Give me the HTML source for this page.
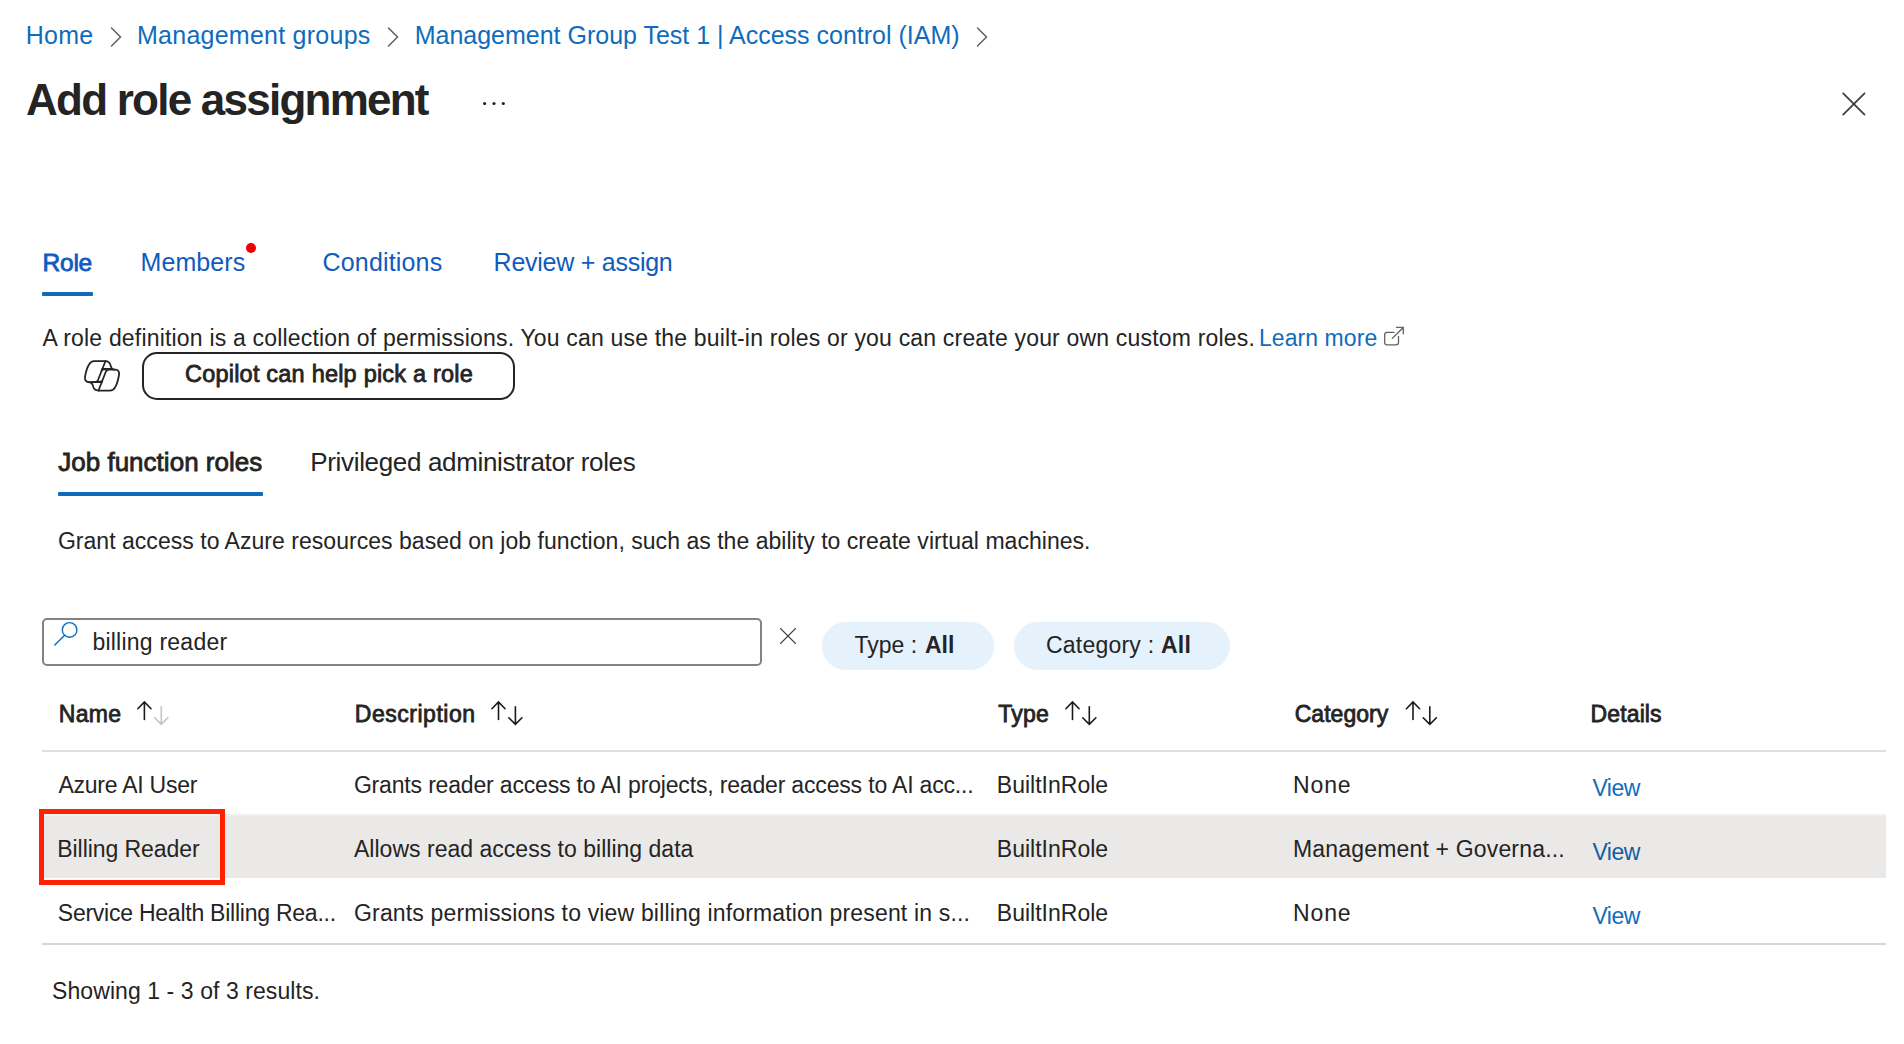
<!DOCTYPE html>
<html><head><meta charset="utf-8"><title>Add role assignment</title>
<style>
html,body{margin:0;padding:0;background:#fff;width:1904px;height:1044px;overflow:hidden;font-family:'Liberation Sans', sans-serif;}
.t{position:absolute;line-height:1;white-space:nowrap;}
.a{position:absolute;}
</style></head><body>
<!-- table rows -->
<div class="a" style="left:42px;top:750px;width:1844px;height:2px;background:#e0e0e0"></div>
<div class="a" style="left:42px;top:814px;width:1844px;height:64px;background:#ebe9e7"></div>
<div class="a" style="left:42px;top:814px;width:1844px;height:2px;background:#f0f0f0"></div>
<div class="a" style="left:42px;top:943px;width:1844px;height:2px;background:#d6d6d6"></div>
<!-- red highlight box -->
<div class="a" style="left:39px;top:809px;width:176px;height:66px;border:5px solid #ff2200"></div>
<!-- tab underline -->
<div class="a" style="left:42px;top:292px;width:51px;height:4px;background:#0f6cbd;border-radius:1px"></div>
<div class="a" style="left:58px;top:492px;width:205px;height:4px;background:#0f6cbd;border-radius:1px"></div>
<!-- red dot -->
<div class="a" style="left:246px;top:243px;width:10px;height:10px;border-radius:50%;background:#f00000"></div>
<!-- copilot button -->
<div class="a" style="left:142px;top:352px;width:369px;height:44px;border:2px solid #242424;border-radius:15px"></div>
<!-- search box -->
<div class="a" style="left:42px;top:618px;width:716px;height:44px;border:2px solid #838383;border-radius:5px"></div>
<!-- pills -->
<div class="a" style="left:822px;top:622px;width:172px;height:48px;border-radius:24px;background:#e5f1fb"></div>
<div class="a" style="left:1014px;top:622px;width:216px;height:48px;border-radius:24px;background:#e5f1fb"></div>
<!-- breadcrumb chevrons -->
<svg class="a" style="left:0;top:0" width="1904" height="130" viewBox="0 0 1904 130">
 <g fill="none" stroke="#616161" stroke-width="1.5" stroke-linecap="round" stroke-linejoin="miter">
  <polyline points="111.5,28 120.5,37 111.5,46"/>
  <polyline points="388.5,28 397.5,37 388.5,46"/>
  <polyline points="977.5,28 986.5,37 977.5,46"/>
 </g>
 <g fill="#242424">
  <circle cx="484.6" cy="103.5" r="1.6"/><circle cx="494" cy="103.5" r="1.6"/><circle cx="503.3" cy="103.5" r="1.6"/>
 </g>
 <g stroke="#424242" stroke-width="1.8" stroke-linecap="round">
  <line x1="1843.2" y1="93.3" x2="1864.5" y2="114.6"/><line x1="1864.5" y1="93.3" x2="1843.2" y2="114.6"/>
 </g>
</svg>
<!-- external link icon -->
<svg class="a" style="left:1376px;top:320px" width="36" height="32" viewBox="0 0 36 32">
 <g fill="none" stroke="#616161" stroke-width="1.3" stroke-linecap="round" stroke-linejoin="round">
  <path d="M18.1,12.3 H11 Q8.7,12.3 8.7,14.6 V22.5 Q8.7,24.8 11,24.8 H20.2 Q22.5,24.8 22.5,22.5 V16.3"/>
  <path d="M16.3,18.4 L27.3,7.5 M20.5,7.4 H27.3 V13.8"/>
 </g>
</svg>
<!-- copilot icon -->
<svg class="a" style="left:76px;top:352px" width="52" height="48" viewBox="0 0 52 48">
 <g fill="none" stroke="#242424" stroke-width="1.75" stroke-linecap="round" stroke-linejoin="round">
  <path d="M18,9 H29.5 L22,28 C21.3,29.5 20.3,30 19,30 H12.5 C10,30 8.6,28 9,25 C9.8,20 11.5,15 13,12.5 C14.3,10.2 16,9 18,9 Z"/>
  <path d="M33,17.5 H39.5 C42,17.5 43.6,19.5 43,23 C42.2,28 40.5,33 39,35.5 C37.7,37.8 36,38.5 34,38.5 H22.5 L29.8,19.8 C30.5,18.3 31.5,17.5 33,17.5 Z"/>
  <path d="M29.5,9 C32,9 33.8,10.5 34.5,13 L35.3,15.5 C35.8,17 37,17.5 38.5,17.5"/>
  <path d="M12.5,30 C14.5,30 16,31 16.7,33 L17.5,35.5 C18.2,37.5 20,38.5 22.5,38.5"/>
  <path d="M26.2,16.8 H35.5"/>
  <path d="M15.8,30.2 H25.8"/>
  <path d="M25.5,18.5 C26.5,17.3 28,17.2 29.8,17.6"/>
  <path d="M22,29.3 C23.5,29.8 25,29.8 26.2,29"/>
 </g>
</svg>
<!-- search icon + clear -->
<svg class="a" style="left:40px;top:610px" width="780" height="50" viewBox="40 610 780 50">
 <g fill="none" stroke="#0f6cbd" stroke-width="1.4" stroke-linecap="round">
  <circle cx="69.6" cy="629.9" r="7.3"/>
  <line x1="54.8" y1="645" x2="64.4" y2="635.4"/>
 </g>
 <g stroke="#424242" stroke-width="1.1" stroke-linecap="round">
  <line x1="780.5" y1="628.5" x2="795.5" y2="643.5"/><line x1="795.5" y1="628.5" x2="780.5" y2="643.5"/>
 </g>
</svg>
<!-- sort arrows -->
<svg class="a" style="left:0;top:690px" width="1904" height="45" viewBox="0 690 1904 45">
 <g fill="none" stroke-width="1.6" stroke-linecap="round" stroke-linejoin="miter">
  <g stroke="#1a1a1a"><path d="M144.4,719.5 V701.8 M137.8,708.7 L144.4,702 L151,708.7"/></g>
  <g stroke="#c4c4c4"><path d="M161.3,706.7 V724.5 M154.7,717.8 L161.3,724.4 L167.9,717.8"/></g>
  <g stroke="#1a1a1a">
   <path d="M498.5,719.5 V701.8 M491.9,708.7 L498.5,702 L505.1,708.7"/>
   <path d="M515.4,706.7 V724.5 M508.8,717.8 L515.4,724.4 L522,717.8"/>
   <path d="M1072.5,719.5 V701.8 M1065.9,708.7 L1072.5,702 L1079.1,708.7"/>
   <path d="M1089.3,706.7 V724.5 M1082.7,717.8 L1089.3,724.4 L1095.9,717.8"/>
   <path d="M1413,719.5 V701.8 M1406.4,708.7 L1413,702 L1419.6,708.7"/>
   <path d="M1429.8,706.7 V724.5 M1423.2,717.8 L1429.8,724.4 L1436.4,717.8"/>
  </g>
 </g>
</svg>

<div class="t" style="left:25.80px;top:23.00px;font-size:25px;font-weight:400;color:#0f6cbd;letter-spacing:0.200px;">Home</div><div class="t" style="left:137.00px;top:23.00px;font-size:25px;font-weight:400;color:#0f6cbd;letter-spacing:0.250px;">Management groups</div><div class="t" style="left:414.70px;top:23.00px;font-size:25px;font-weight:400;color:#0f6cbd;letter-spacing:-0.007px;">Management Group Test 1 | Access control (IAM)</div><div class="t" style="left:26.00px;top:77.60px;font-size:44px;font-weight:700;color:#242424;letter-spacing:-1.761px;">Add role assignment</div><div class="t" style="left:42.60px;top:251.00px;font-size:24.5px;font-weight:400;color:#0f5bbf;letter-spacing:-0.267px;-webkit-text-stroke:0.8px currentColor;">Role</div><div class="t" style="left:140.60px;top:250.00px;font-size:25px;font-weight:400;color:#0f5bbf;letter-spacing:0.067px;">Members</div><div class="t" style="left:322.60px;top:250.00px;font-size:25px;font-weight:400;color:#0f5bbf;letter-spacing:0.156px;">Conditions</div><div class="t" style="left:493.60px;top:250.00px;font-size:25px;font-weight:400;color:#0f5bbf;letter-spacing:-0.257px;">Review + assign</div><div class="t" style="left:42.40px;top:326.70px;font-size:23px;font-weight:400;color:#242424;letter-spacing:0.185px;">A role definition is a collection of permissions. You can use the built-in roles or you can create your own custom roles.</div><div class="t" style="left:1259.00px;top:326.70px;font-size:23px;font-weight:400;color:#0f6cbd;letter-spacing:0.067px;">Learn more</div><div class="t" style="left:185.00px;top:362.80px;font-size:23.5px;font-weight:400;color:#242424;letter-spacing:0.211px;-webkit-text-stroke:0.8px currentColor;">Copilot can help pick a role</div><div class="t" style="left:58.20px;top:449.00px;font-size:26px;font-weight:400;color:#242424;letter-spacing:0.018px;-webkit-text-stroke:0.8px currentColor;">Job function roles</div><div class="t" style="left:310.30px;top:448.80px;font-size:26px;font-weight:400;color:#242424;letter-spacing:-0.338px;">Privileged administrator roles</div><div class="t" style="left:57.90px;top:529.60px;font-size:23px;font-weight:400;color:#242424;letter-spacing:0.034px;">Grant access to Azure resources based on job function, such as the ability to create virtual machines.</div><div class="t" style="left:92.40px;top:630.70px;font-size:23px;font-weight:400;color:#242424;letter-spacing:0.231px;">billing reader</div><div class="t" style="left:854.40px;top:633.90px;font-size:23px;font-weight:400;color:#242424;letter-spacing:0.040px;">Type :</div><div class="t" style="left:925.00px;top:633.90px;font-size:23px;font-weight:700;color:#242424;letter-spacing:0.000px;">All</div><div class="t" style="left:1045.90px;top:633.90px;font-size:23px;font-weight:400;color:#242424;letter-spacing:0.233px;">Category :</div><div class="t" style="left:1161.00px;top:633.90px;font-size:23px;font-weight:700;color:#242424;letter-spacing:0.200px;">All</div><div class="t" style="left:58.70px;top:703.00px;font-size:23px;font-weight:400;color:#242424;letter-spacing:0.333px;-webkit-text-stroke:0.8px currentColor;">Name</div><div class="t" style="left:354.80px;top:702.50px;font-size:23px;font-weight:400;color:#242424;letter-spacing:0.520px;-webkit-text-stroke:0.8px currentColor;">Description</div><div class="t" style="left:998.20px;top:703.00px;font-size:23px;font-weight:400;color:#242424;letter-spacing:0.233px;-webkit-text-stroke:0.8px currentColor;">Type</div><div class="t" style="left:1294.70px;top:703.00px;font-size:23px;font-weight:400;color:#242424;letter-spacing:0.043px;-webkit-text-stroke:0.8px currentColor;">Category</div><div class="t" style="left:1590.60px;top:703.00px;font-size:23px;font-weight:400;color:#242424;letter-spacing:0.117px;-webkit-text-stroke:0.8px currentColor;">Details</div><div class="t" style="left:58.40px;top:774.00px;font-size:23px;font-weight:400;color:#242424;letter-spacing:-0.242px;">Azure AI User</div><div class="t" style="left:353.90px;top:774.00px;font-size:23px;font-weight:400;color:#242424;letter-spacing:-0.168px;">Grants reader access to AI projects, reader access to AI acc...</div><div class="t" style="left:996.80px;top:774.00px;font-size:23px;font-weight:400;color:#242424;letter-spacing:0.010px;">BuiltInRole</div><div class="t" style="left:1293.00px;top:774.00px;font-size:23px;font-weight:400;color:#242424;letter-spacing:0.867px;">None</div><div class="t" style="left:1592.40px;top:777.00px;font-size:23px;font-weight:400;color:#0f6cbd;letter-spacing:-0.467px;">View</div><div class="t" style="left:57.30px;top:837.70px;font-size:23px;font-weight:400;color:#242424;letter-spacing:-0.069px;">Billing Reader</div><div class="t" style="left:354.00px;top:837.70px;font-size:23px;font-weight:400;color:#242424;letter-spacing:0.018px;">Allows read access to billing data</div><div class="t" style="left:996.80px;top:837.70px;font-size:23px;font-weight:400;color:#242424;letter-spacing:0.010px;">BuiltInRole</div><div class="t" style="left:1293.00px;top:837.70px;font-size:23px;font-weight:400;color:#242424;letter-spacing:0.173px;">Management + Governa...</div><div class="t" style="left:1592.40px;top:840.70px;font-size:23px;font-weight:400;color:#115ea3;letter-spacing:-0.467px;">View</div><div class="t" style="left:57.80px;top:902.00px;font-size:23px;font-weight:400;color:#242424;letter-spacing:-0.243px;">Service Health Billing Rea...</div><div class="t" style="left:354.00px;top:902.00px;font-size:23px;font-weight:400;color:#242424;letter-spacing:0.164px;">Grants permissions to view billing information present in s...</div><div class="t" style="left:996.80px;top:902.00px;font-size:23px;font-weight:400;color:#242424;letter-spacing:0.010px;">BuiltInRole</div><div class="t" style="left:1293.00px;top:902.00px;font-size:23px;font-weight:400;color:#242424;letter-spacing:0.867px;">None</div><div class="t" style="left:1592.40px;top:905.00px;font-size:23px;font-weight:400;color:#0f6cbd;letter-spacing:-0.467px;">View</div><div class="t" style="left:52.10px;top:980.00px;font-size:23px;font-weight:400;color:#242424;letter-spacing:0.073px;">Showing 1 - 3 of 3 results.</div>
</body></html>
